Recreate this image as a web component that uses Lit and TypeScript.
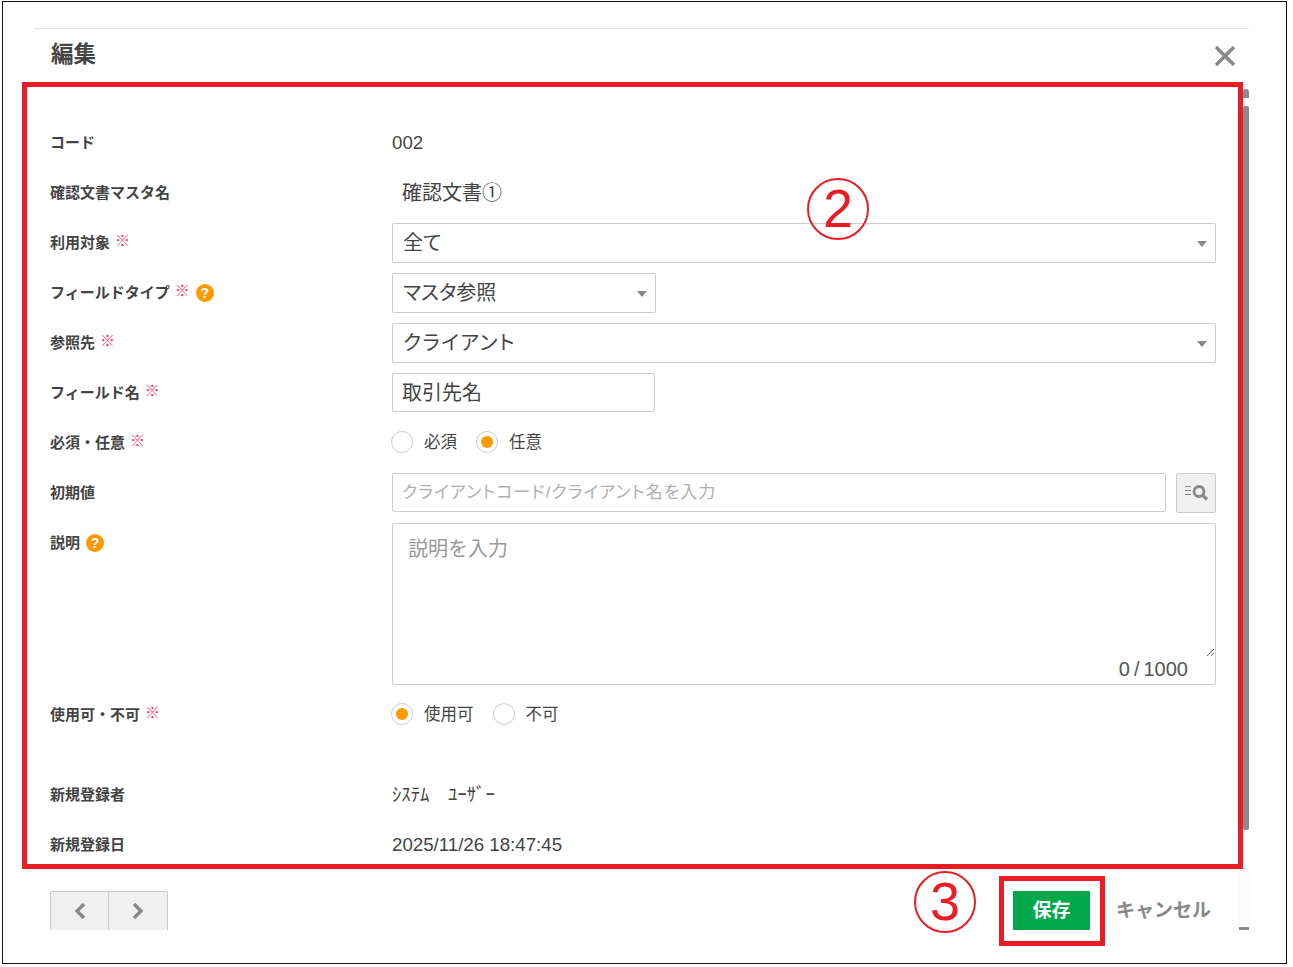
import { LitElement, html, css } from "lit";
import { customElement } from "lit/decorators.js";

const help = html`<span class="help">?</span>`;
const req = html`<span class="req">※</span>`;
const arrow = html`<svg class="arrow" width="10" height="6" viewBox="0 0 10 6"><path d="M0 0h10L5 6z" fill="#888"/></svg>`;

@customElement("app-root")
export class AppRoot extends LitElement {
  static styles = css`
    :host { display: block; position: relative; width: 1293px; height: 967px; overflow: hidden; background: #fff;
      font-family: "Liberation Sans", "Noto Sans CJK JP", sans-serif; color: #444; }
    * { box-sizing: border-box; }
    .frame { position: absolute; left: 2px; top: 1px; width: 1285px; height: 963px; border: 1px solid #111; }
    .dialog { margin: 26px 0 0 31px; width: 1215px; display: flex; flex-direction: column; }
    .head { height: 54px; border-top: 1px solid #e2e2e2; display: flex; align-items: center; justify-content: space-between; padding: 0 13px 2px 16px; }
    .title { font-size: 22.5px; font-weight: 700; color: #444; line-height: 1; padding: 2px 0 0 1px; }
    .close { display: block; margin-top: 2px; }
    .main { display: flex; height: 787px; }
    .content { width: 1209px; padding: 36px 0 0 16px; overflow: hidden; }
    .scroll { width: 6px; display: flex; flex-direction: column; align-items: stretch; padding-top: 7px; gap: 8px; }
    .s-up { height: 9px; background: #8c8c8c; border-radius: 3px 3px 0 0; }
    .s-thumb { height: 724px; background: #8c8c8c; border-radius: 2px; }
    .row { display: flex; align-items: center; height: 50px; }
    .row.tall { height: 172px; align-items: flex-start; padding-top: 5px; }
    .row.tall .label { height: 39px; margin-bottom: 0; }
    .label { width: 342px; flex: none; font-size: 15px; font-weight: 700; color: #444; display: flex; align-items: center; line-height: 20px; margin-bottom: 1px; }
    .req { color: #f0406c; font-size: 15px; font-weight: 400; margin: -4px 0 0 5px; line-height: 1; }
    .help { width: 18px; height: 18px; border-radius: 50%; background: #f90; color: #fff; font-size: 14px; font-weight: 700; display: inline-flex; align-items: center; justify-content: center; margin-left: 6px; line-height: 1; }
    .value { width: 824px; display: flex; align-items: center; }
    .text { font-size: 18.7px; color: #444; line-height: 24px; }
    .plain { font-size: 20px; color: #444; padding: 0 0 0 10px; line-height: 28px; }
    .kana { font-size: 18.7px; color: #444; line-height: 24px; white-space: pre; }
    .field { position: relative; height: 40px; border: 1px solid #ccc; border-radius: 2px; font-size: 20px; color: #444; display: flex; align-items: center; padding-left: 10px; background: #fff; line-height: 1; font-feature-settings: "palt"; }
    .loose { letter-spacing: 1.5px; }
    .wide { width: 824px; }
    .narrow { width: 264px; }
    .arrow { position: absolute; right: 8px; top: 17px; }
    .input { width: 263px; height: 39px; margin-top: -2px; border: 1px solid #ccc; border-radius: 2px; font: 20px "Liberation Sans", "Noto Sans CJK JP", sans-serif; color: #444; padding: 0 9px 2px; outline: none; }
    .search { width: 774px; height: 39px; margin-top: -2px; border: 1px solid #ccc; border-radius: 2px; font: 17px "Liberation Sans", "Noto Sans CJK JP", sans-serif; font-feature-settings: "palt"; letter-spacing: 1px; padding: 2px 9px 0; outline: none; }
    .search::placeholder { color: #b0b0b0; }
    .sbtn { width: 40px; height: 40px; margin-left: 10px; background: #f0f0f0; border: 1px solid #ccc; border-radius: 2px; display: flex; align-items: center; justify-content: center; }
    .tawrap { position: relative; width: 824px; height: 162px; border: 1px solid #ccc; border-radius: 2px; }
    textarea { display: block; width: 822px; height: 133px; border: none; font: 20px "Liberation Sans", "Noto Sans CJK JP", sans-serif; padding: 9px 15px; outline: none; color: #444; background: transparent; }
    textarea::placeholder { color: #999; }
    .count { position: absolute; right: 27px; bottom: 3px; font-size: 20px; color: #555; line-height: 24px; word-spacing: -1.5px; }
    .radios { display: flex; align-items: center; font-size: 16.5px; color: #444; padding-bottom: 2px; }
    .radio { width: 22px; height: 22px; border-radius: 50%; border: 1px solid #ccc; display: flex; align-items: center; justify-content: center; flex: none; margin-left: -1px; }
    .radio.on::after { content: ""; width: 12px; height: 12px; border-radius: 50%; background: #f90; }
    .rlabel { margin-left: 11px; margin-right: 20px; line-height: 24px; }
    .spacer { height: 30px; }
    .foot { height: 61px; overflow: hidden; display: flex; padding: 22px 0 0 16px; }
    .pager { width: 118px; height: 46px; display: flex; border: 1px solid #ccc; border-radius: 2px; background: #f0f0f0; flex: none; }
    .pbtn { flex: 1; display: flex; align-items: flex-start; justify-content: center; padding-top: 10px; }
    .pbtn:first-child { flex: none; width: 57px; }
    .pbtn + .pbtn { border-left: 1px solid #ccc; }
    .save { margin-left: 845px; width: 77px; height: 39px; background: #00a84a; color: #fff; border: none; border-radius: 1px; font: 700 19px "Liberation Sans", "Noto Sans CJK JP", sans-serif; padding: 0 0 4px; flex: none; }
    .cancel { margin-left: 26px; font-size: 19px; font-weight: 700; color: #888; line-height: 40px; flex: none; }
    .mark-box { position: absolute; border: 5px solid #ed1c24; pointer-events: none; }
    .box-main { left: 22px; top: 82px; width: 1221px; height: 787px; }
    .box-save { left: 999px; top: 876px; width: 106px; height: 70px; }
    .num { position: absolute; width: 62px; height: 62px; border: 2px solid #ed1c24; border-radius: 50%; color: #ed1c24; font-size: 54px; line-height: 56px; text-align: center; font-family: "Liberation Sans", sans-serif; }
    .n2 { left: 807px; top: 178px; }
    .n3 { left: 914px; top: 871px; }
    .fade { position: absolute; left: 1237px; top: 869px; width: 12px; height: 56px; background: #fbfbfb; }
    .tick { position: absolute; left: 1239px; top: 927px; width: 10px; height: 3px; background: #8c8c8c; }
  `;

  render() {
    return html`
      <div class="frame">
        <div class="dialog">
          <div class="head">
            <div class="title">編集</div>
            <svg class="close" width="22" height="22" viewBox="0 0 22 22"><path d="M2 2l18 18M20 2L2 20" stroke="#888" stroke-width="3.4" fill="none"/></svg>
          </div>
          <div class="main">
            <div class="content">
              <div class="row"><div class="label">コード</div><div class="value"><span class="text">002</span></div></div>
              <div class="row"><div class="label">確認文書マスタ名</div><div class="value"><span class="plain">確認文書①</span></div></div>
              <div class="row"><div class="label">利用対象${req}</div><div class="value"><div class="field wide">全て${arrow}</div></div></div>
              <div class="row"><div class="label">フィールドタイプ${req}${help}</div><div class="value"><div class="field narrow">マスタ参照${arrow}</div></div></div>
              <div class="row"><div class="label">参照先${req}</div><div class="value"><div class="field wide loose">クライアント${arrow}</div></div></div>
              <div class="row"><div class="label">フィールド名${req}</div><div class="value"><input class="input" .value=${"取引先名"} /></div></div>
              <div class="row"><div class="label">必須・任意${req}</div><div class="value radios">
                <span class="radio"></span><span class="rlabel">必須</span>
                <span class="radio on"></span><span class="rlabel">任意</span>
              </div></div>
              <div class="row"><div class="label">初期値</div><div class="value">
                <input class="search" placeholder="クライアントコード/クライアント名を入力" />
                <div class="sbtn"><svg width="24" height="18" viewBox="0 0 24 18" fill="none" stroke="#888"><path d="M1 2.5h6M1 6.5h6M1 10.5h6" stroke-width="1"/><circle cx="15" cy="7.5" r="5" stroke-width="2.8"/><path d="M18.5 11l4.5 4.5" stroke-width="3.2"/></svg></div>
              </div></div>
              <div class="row tall"><div class="label">説明${help}</div><div class="tawrap"><textarea placeholder="説明を入力"></textarea><span class="count">0 / 1000</span></div></div>
              <div class="row"><div class="label">使用可・不可${req}</div><div class="value radios">
                <span class="radio on"></span><span class="rlabel">使用可</span>
                <span class="radio"></span><span class="rlabel">不可</span>
              </div></div>
              <div class="spacer"></div>
              <div class="row"><div class="label">新規登録者</div><div class="value"><span class="kana">ｼｽﾃﾑ　ﾕｰｻﾞｰ</span></div></div>
              <div class="row"><div class="label">新規登録日</div><div class="value"><span class="text">2025/11/26 18:47:45</span></div></div>
            </div>
            <div class="scroll"><div class="s-up"></div><div class="s-thumb"></div></div>
          </div>
          <div class="foot">
            <div class="pager">
              <div class="pbtn"><svg width="14" height="18" viewBox="0 0 14 18"><path d="M11 2L4 9l7 7" fill="none" stroke="#888" stroke-width="3.4"/></svg></div>
              <div class="pbtn"><svg width="14" height="18" viewBox="0 0 14 18"><path d="M3 2l7 7-7 7" fill="none" stroke="#888" stroke-width="3.4"/></svg></div>
            </div>
            <button class="save">保存</button>
            <div class="cancel">キャンセル</div>
          </div>
        </div>
      </div>
      <div class="fade"></div>
      <div class="tick"></div>
      <div class="mark-box box-main"></div>
      <div class="mark-box box-save"></div>
      <div class="num n2">2</div>
      <div class="num n3">3</div>
    `;
  }
}
